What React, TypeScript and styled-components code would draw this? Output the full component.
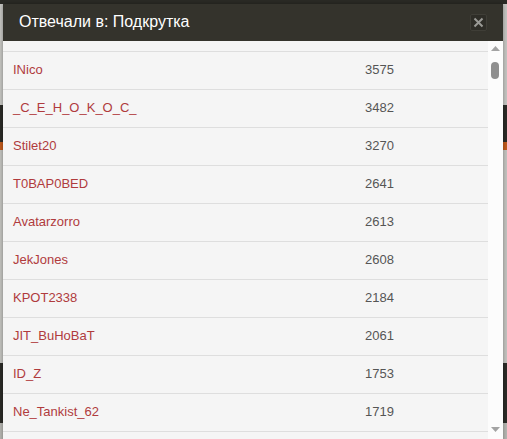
import React from "react";
import styled, { createGlobalStyle } from "styled-components";

const Global = createGlobalStyle`
  html, body { margin: 0; padding: 0; }
  body {
    width: 507px; height: 439px; overflow: hidden;
    background: #b9b9b5;
    font-family: "Liberation Sans", Arial, sans-serif;
  }
`;

const Page = styled.div`
  position: relative;
  width: 507px;
  height: 439px;
  overflow: hidden;
  display: flex;
  flex-direction: column;
  background: #c2c2be;
`;

const Band = styled.div<{ $h: number; $c: string }>`
  height: ${(p) => p.$h}px;
  background: ${(p) => p.$c};
  flex-shrink: 0;
`;

const Modal = styled.div`
  position: absolute;
  left: 3px;
  top: 4px;
  width: 500px;
  height: 440px;
  display: flex;
  flex-direction: column;
  box-shadow: 0 0 4px rgba(0, 0, 0, 0.35);
`;

const Header = styled.div`
  height: 37px;
  flex-shrink: 0;
  background: #34332c;
  display: flex;
  align-items: center;
  justify-content: space-between;
  padding: 0 16px 1px 16px;
  box-sizing: border-box;
`;

const Title = styled.div`
  color: #ffffff;
  font-size: 16px;
`;

const Close = styled.div`
  width: 17px;
  height: 17px;
  box-sizing: border-box;
  background: #2e2d27;
  border: 1px solid #3f3e37;
  border-radius: 2px;
  display: flex;
  align-items: center;
  justify-content: center;
`;

const Body = styled.div`
  flex: 1;
  display: flex;
  background: #f5f5f5;
  overflow: hidden;
`;

const List = styled.div`
  flex: 1;
  padding-top: 10px;
`;

const Row = styled.div`
  display: grid;
  grid-template-columns: 352px 1fr;
  height: 38px;
  box-sizing: border-box;
  border-top: 1px solid #dedede;
  align-items: center;
  padding: 0 0 2px 10px;
  font-size: 13px;
`;

const Name = styled.span`
  color: #b03b3d;
`;

const Count = styled.span`
  color: #555555;
`;

const Scrollbar = styled.div`
  width: 15px;
  background: #fcfcfc;
  position: relative;
`;

const Arrow = styled.div<{ $top: number }>`
  position: absolute;
  top: ${(p) => p.$top}px;
  left: 3px;
  width: 9px;
  height: 5px;
  display: flex;
`;

const Thumb = styled.div`
  position: absolute;
  top: 21px;
  left: 3px;
  width: 8px;
  height: 17px;
  border-radius: 4px;
  background: #8f8f8f;
`;

const rows: [string, number][] = [
  ["INico", 3575],
  ["_C_E_H_O_K_O_C_", 3482],
  ["Stilet20", 3270],
  ["T0BAP0BED", 2641],
  ["Avatarzorro", 2613],
  ["JekJones", 2608],
  ["KPOT2338", 2184],
  ["JIT_BuHoBaT", 2061],
  ["ID_Z", 1753],
  ["Ne_Tankist_62", 1719],
  ["", 0],
];

export default function App() {
  return (
    <>
      <Global />
      <Page>
        <Band $h={4} $c="#2a2a25" />
        <Band $h={101} $c="#c4c4c0" />
        <Band $h={37} $c="#2b2b27" />
        <Band $h={8} $c="#c05a1c" />
        <Band $h={213} $c="#c2c2be" />
        <Band $h={60} $c="#2b2b27" />
        <Band $h={20} $c="#b5b5b0" />
        <Modal>
          <Header>
            <Title>Отвечали в: Подкрутка</Title>
            <Close>
              <svg width="11" height="11" viewBox="0 0 11 11">
                <path d="M1.5 1.5 L9.5 9.5 M9.5 1.5 L1.5 9.5" stroke="#9a9a96" strokeWidth="2" />
              </svg>
            </Close>
          </Header>
          <Body>
            <List>
              {rows.map(([n, c], i) => (
                <Row key={i}>
                  <Name>{n}</Name>
                  <Count>{c ? c : ""}</Count>
                </Row>
              ))}
            </List>
            <Scrollbar>
              <Arrow $top={5}>
                <svg width="9" height="5" viewBox="0 0 9 5">
                  <path d="M0 5 L4.5 0 L9 5 Z" fill="#a3a3a3" />
                </svg>
              </Arrow>
              <Thumb />
              <Arrow $top={386}>
                <svg width="9" height="5" viewBox="0 0 9 5">
                  <path d="M0 0 L9 0 L4.5 5 Z" fill="#a3a3a3" />
                </svg>
              </Arrow>
            </Scrollbar>
          </Body>
        </Modal>
      </Page>
    </>
  );
}
